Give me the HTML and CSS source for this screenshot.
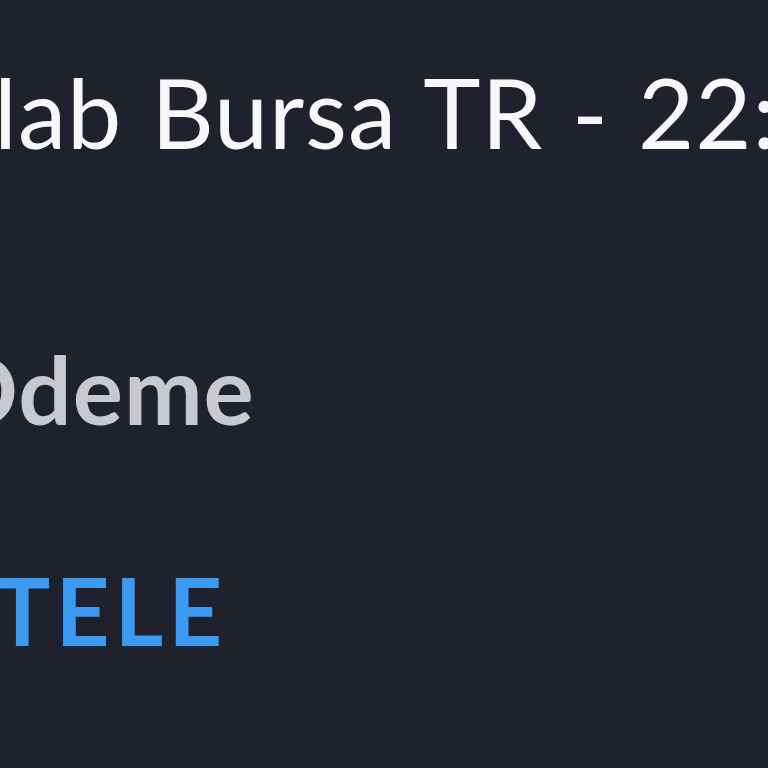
FILE: index.html
```html
<!DOCTYPE html>
<html>
<head>
<meta charset="utf-8">
<link rel="stylesheet" href="styles.css">
</head>
<body>
<main class="screen">
  <h1 class="title">lab Bursa TR - 22:</h1>
  <div class="label">Ödeme</div>
  <div class="link">TELE</div>
</main>
</body>
</html>
```
FILE: styles.css
```css
html, body {
  margin: 0;
  padding: 0;
  background: #1f222c;
  overflow: hidden;
}
.screen {
  width: 768px;
  height: 768px;
  display: flex;
  flex-direction: column;
  font-family: Lato, "Open Sans", sans-serif;
  white-space: nowrap;
  overflow: hidden;
}
.title {
  margin: 52px 0 0 -6px;
  font-size: 97px;
  font-weight: 400;
  line-height: 120px;
  letter-spacing: 1px;
  word-spacing: 3px;
  color: #f7f7f9;
}
.label {
  margin: 162px 0 0 -58px;
  font-size: 94px;
  font-weight: 700;
  line-height: 110px;
  letter-spacing: 1px;
  color: #c8c9ce;
}
.link {
  margin: 111px 0 0 -6px;
  font-size: 94px;
  font-weight: 700;
  line-height: 110px;
  letter-spacing: 5px;
  color: #3b9bf2;
}
```
